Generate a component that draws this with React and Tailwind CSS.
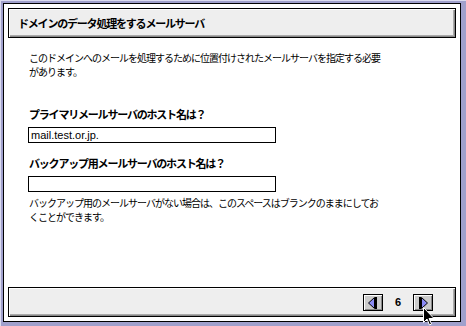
import React from "react";

const jp = { fontFamily: '"Noto Sans CJK JP", "Liberation Sans", sans-serif' };

function NavButton({ dir }) {
  return (
    <div className="w-[20px] h-[17px] border border-black bg-[#cccccc] shadow-[inset_1px_1px_0_#ffffff,inset_-1px_-1px_0_#888888] flex items-center justify-center">
      {dir === "left" ? (
        <svg width="10" height="12" viewBox="0 0 10 12">
          <polygon points="6.5,0.5 6.5,11.5 0.5,6" fill="#8c8cf4" stroke="#000" strokeWidth="1" />
          <rect x="7" y="0" width="2" height="12" fill="#000" />
        </svg>
      ) : (
        <svg width="10" height="12" viewBox="0 0 10 12">
          <rect x="1" y="0" width="2" height="12" fill="#000" />
          <polygon points="3.5,0.5 3.5,11.5 9.5,6" fill="#8c8cf4" stroke="#000" strokeWidth="1" />
        </svg>
      )}
    </div>
  );
}

export default function App() {
  return (
    <div className="relative w-[466px] h-[326px] bg-[#a0a0cc] pl-[3px] pt-[3px] pr-[5px] pb-[4px] shadow-[inset_1px_1px_0_#dcdcf0]">
      <div className="w-full h-full border border-black bg-white p-[4px] flex flex-col">
        <div className="h-[30px] border border-black bg-[#eeeeee] shadow-[inset_1px_1px_0_#ffffff,inset_-1px_-1px_0_#888888,inset_-2px_-2px_0_#aaaaaa] flex items-center pl-[9px]">
          <span style={jp} className="text-[11px] font-bold tracking-[-1.2px] text-black leading-none">
            ドメインのデータ処理をするメールサーバ
          </span>
        </div>
        <div className="flex-1 pl-[20px] pt-[13px] text-black" style={jp}>
          <p className="pl-[1px] text-[10px] leading-[14px] tracking-[-1px] whitespace-nowrap">
            このドメインへのメールを処理するために位置付けされたメールサーバを指定する必要
            <br />
            があります。
          </p>
          <p className="mt-[28px] pl-[1px] text-[11px] font-bold leading-[14px] tracking-[-1.2px]">
            プライマリメールサーバのホスト名は？
          </p>
          <div className="mt-[6px] w-[248px] h-[16px] border border-black flex items-center pl-[2px]">
            <span className="text-[11px] leading-none" style={{ fontFamily: '"Liberation Sans", sans-serif' }}>
              mail.test.or.jp.
            </span>
          </div>
          <p className="mt-[13px] pl-[1px] text-[11px] font-bold leading-[14px] tracking-[-1.2px]">
            バックアップ用メールサーバのホスト名は？
          </p>
          <div className="mt-[6px] w-[248px] h-[16px] border border-black" />
          <p className="mt-[4px] pl-[1px] text-[10px] leading-[14px] tracking-[-1px] whitespace-nowrap">
            バックアップ用のメールサーバがない場合は、このスペースはブランクのままにしてお
            <br />
            くことができます。
          </p>
        </div>
        <div className="h-[30px] border border-black bg-[#eeeeee] shadow-[inset_1px_1px_0_#ffffff,inset_-1px_-1px_0_#888888,inset_-2px_-2px_0_#aaaaaa] flex items-center justify-end pr-[22px] pt-[1px]">
          <NavButton dir="left" />
          <span className="w-[30px] text-center text-[11px] font-bold text-black" style={{ fontFamily: '"Liberation Sans", sans-serif' }}>
            6
          </span>
          <NavButton dir="right" />
        </div>
      </div>
      <svg className="absolute left-[423px] top-[307px]" width="12" height="19" viewBox="0 0 12 19">
        <path d="M0.5 0.5 L0.5 15.5 L4 12 L6.5 18 L8.5 17 L6 11.5 L11 11.5 Z" fill="#000" stroke="#fff" strokeWidth="1" />
      </svg>
    </div>
  );
}
